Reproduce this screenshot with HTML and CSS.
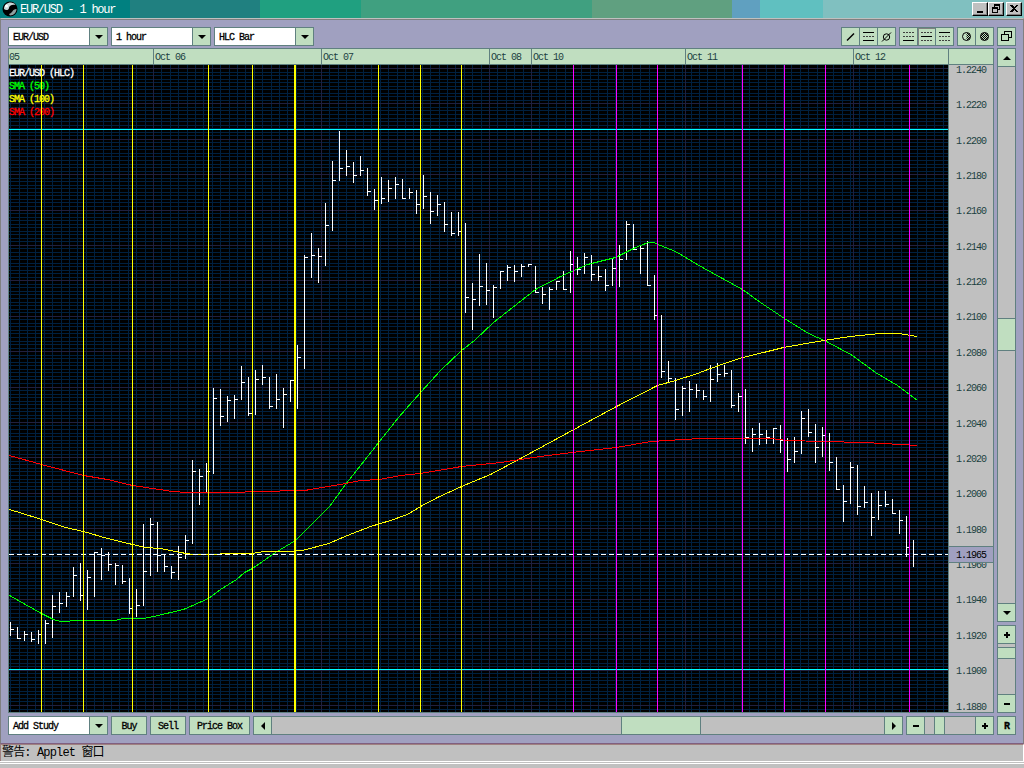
FILE: index.html
```html
<!DOCTYPE html>
<html lang="en">
<head>
    <meta charset="UTF-8">
    <title>EUR/USD - 1 hour</title>
    <link rel="stylesheet" href="styles.css">
</head>
<body>

    <div class="titlebar">
        <svg class="logo" width="18" height="18" viewBox="0 0 18 18">
            <circle cx="9" cy="9" r="7.500" fill="#000"/>
            <path d="M3 9C3 5 6 2.500 10 2.500C13 3 14 4 14.500 5C11 4 8 6 8 8C8 10 5 11 3 9Z" fill="#c8d8d8"/>
            <path d="M8 14C12 13 11 9 15.500 9C15.500 12 13 15.500 9 15.500Z" fill="#90a0a0"/>
            <circle cx="5.500" cy="6" r="1.500" fill="#fff"/>
        </svg>
        <span class="title">EUR/USD - 1 hour</span>
        <div class="window-buttons">
            <div class="win-btn"><svg width="12" height="11"><path d="M3 8h6v2h-6z"/></svg></div>
            <div class="win-btn"><svg width="12" height="11"><path d="M4 1h6v6h-2v3h-6v-6h2zM5 3v1h3v2h1v-3zM3 6v3h4v-3z" fill-rule="evenodd"/></svg></div>
            <div class="win-btn close"><svg width="12" height="11"><path d="M2 2h2l2 2 2-2h2L7 5.500 10 9H8L6 7 4 9H2l3-3.500z"/></svg></div>
        </div>
    </div>

    <div class="client">
        <div class="row toolbar">
            <div class="combo"><span>EUR/USD</span><b><i class="tri down"></i></b></div>
            <div class="combo"><span>1 hour</span><b><i class="tri down"></i></b></div>
            <div class="combo"><span>HLC Bar</span><b><i class="tri down"></i></b></div>

            <div class="tools">
                <div class="group">
                    <div class="tool"><svg width="17" height="17"><path d="M5 12.500L12 5.500" class="ink slant"/></svg></div>
                    <div class="tool"><svg width="17" height="17"><path d="M3 4.500h11M3 12.500h11" class="ink"/><path d="M3 8.500h11" class="ink dots"/></svg></div>
                    <div class="tool"><svg width="17" height="17"><circle cx="8.500" cy="9" r="3.200" class="ink round"/><path d="M4 13.500L13 4.500" class="ink slant thin"/></svg></div>
                </div>
                <div class="group">
                    <div class="tool"><svg width="17" height="17"><path d="M3 4.500h11M3 8.500h11" class="ink dots"/><path d="M3 12.500h11" class="ink"/></svg></div>
                    <div class="tool pressed"><svg width="17" height="17"><path d="M3 4.500h11M3 12.500h11" class="ink dots"/><path d="M3 8.500h11" class="ink"/></svg></div>
                    <div class="tool"><svg width="17" height="17"><path d="M3 8.500h11M3 12.500h11" class="ink dots"/><path d="M3 4.500h11" class="ink"/></svg></div>
                </div>
                <div class="group">
                    <div class="tool"><svg width="17" height="17"><circle cx="8.500" cy="8.500" r="4" class="ink round"/><path d="M8.500 4.500A4 4 0 0 1 8.500 12.500Z" fill="url(#check)"/></svg></div>
                    <div class="tool"><svg width="17" height="17"><defs><pattern id="check" width="2" height="2" patternUnits="userSpaceOnUse"><path d="M0 0h1v1h-1zM1 1h1v1h-1z"/></pattern></defs><circle cx="8.500" cy="8.500" r="4" class="ink round-fill"/></svg></div>
                </div>
                <div class="group">
                    <div class="tool"><svg width="17" height="17"><path d="M6.500 3.500h7v6h-7z" class="ink"/><path d="M3.500 6.500h7v6h-7z" class="ink solid"/></svg></div>
                </div>
            </div>
        </div>

        <div class="middle">
            <div class="chart-panel">
                <div class="dates">
                    <span class="d1">05</span><span class="day">Oct 06</span><span class="day">Oct 07</span><span class="d2">Oct 08</span><span class="d3">Oct 10</span><span class="day">Oct 11</span><span class="d4">Oct 12</span><span class="d5"></span>
                </div>
                <div class="plot-row">
                    <div class="plot">
                        <svg id="chart" width="939" height="647" viewBox="9 65 939 647"></svg>
                        <div class="legend">
                            <p>EUR/USD (HLC)</p>
                            <p class="green">SMA (50)</p>
                            <p class="yellow">SMA (100)</p>
                            <p class="red">SMA (200)</p>
                        </div>
                        <svg class="overlay" id="markers" width="939" height="647" viewBox="9 65 939 647"></svg>
                    </div>
                    <div class="axis">
                        <div id="prices"></div>
                        <div class="last-price">1.1965</div>
                    </div>
                </div>
            </div>

            <div class="side">
                <div class="vscroll big">
                    <div class="cap"><i class="tri up"></i></div>
                    <div class="thumb"></div>
                    <div class="cap end"><i class="tri down"></i></div>
                </div>
                <div class="vscroll small">
                    <div class="cap"><i class="plus"></i></div>
                    <div class="thumb"></div>
                    <div class="cap end"><i class="minus"></i></div>
                </div>
            </div>
        </div>

        <div class="row bottom">
            <div class="combo"><span>Add Study</span><b><i class="tri down"></i></b></div>
            <div class="button buy">Buy</div>
            <div class="button sell">Sell</div>
            <div class="button box">Price Box</div>
            <div class="hscroll long">
                <div class="cap"><i class="tri left"></i></div>
                <div class="thumb"></div>
                <div class="cap end"><i class="tri right"></i></div>
            </div>
            <div class="hscroll short">
                <div class="cap"><i class="minus"></i></div>
                <div class="thumb"></div>
                <div class="cap end"><i class="plus"></i></div>
            </div>
            <div class="button reset">R</div>
        </div>
    </div>

    <div class="status">警告: Applet 窗口</div>
    <div class="footer"></div>

    <script src="script.js"></script>
</body>
</html>
```

FILE: styles.css
```css
* {
    box-sizing: border-box;
}

body {
    margin: 0;
    width: 1024px;
    height: 768px;
    overflow: hidden;
    background: #c0c0c0;
    color: #000;
    font-family: "Liberation Mono", "Noto Sans CJK SC", monospace;
    font-size: 10px;
    letter-spacing: -1px;
    white-space: nowrap;
}

/* Window title */
.titlebar {
    display: flex;
    height: 18px;
    background: linear-gradient(to right, #008080 130px, #208080 130px 260px, #20a080 260px 361px, #40a080 361px 592px, #60a080 592px 732px, #60a0c0 732px 760px, #60c0c0 760px 823px, #80c0c0 823px);
}

.logo {
    margin-left: 1px;
}

.title {
    margin-left: 1px;
    color: #fff;
    font-size: 12px;
    letter-spacing: -1.25px;
    line-height: 20px;
}

.window-buttons {
    display: flex;
    margin: 2px 2px 0 auto;
}

.win-btn {
    width: 16px;
    height: 14px;
    padding: 0 1px;
    background: #c0c0c0;
    border: 1px solid;
    border-color: #fff #000 #000 #fff;
    box-shadow: inset -1px -1px #808080;
}

.win-btn svg {
    display: block;
    shape-rendering: crispEdges;
}

.close {
    margin-left: 2px;
}

/* Applet area */
.client {
    height: 726px;
    padding: 7px 7px 0;
    background: #a0a0c0;
    border-top: 1px solid #c0c0c0;
    border-left: 1px solid #808080;
    border-right: 1px solid #808080;
    border-bottom: 1px solid #806080;
    box-shadow: inset 0 1px #808080;
}

.row {
    display: flex;
    gap: 3px;
    height: 19px;
}

.toolbar {
    margin-top: 1px;
}

.combo {
    display: flex;
    width: 100px;
    height: 19px;
    background: #fff;
    border: 1px solid #608080;
}

.combo span {
    flex: 1;
    padding-left: 4px;
    line-height: 20px;
    -webkit-text-stroke: 0.3px #000;
}

.combo b {
    display: flex;
    width: 18px;
    align-items: center;
    justify-content: center;
    background: #c0dec0;
    border-left: 1px solid #608080;
}

.tri {
    width: 0;
    height: 0;
    border: 4px solid transparent;
}

.down {
    border-top-color: #000;
    border-bottom: 0;
}

.up {
    border-bottom-color: #000;
    border-top: 0;
}

.left {
    border-right-color: #000;
    border-left: 0;
}

.right {
    border-left-color: #000;
    border-right: 0;
}

.plus, .minus {
    width: 6px;
    height: 6px;
    background: linear-gradient(#000, #000) center / 6px 2px no-repeat;
}

.plus {
    background: linear-gradient(#000, #000) center / 6px 2px no-repeat, linear-gradient(#000, #000) center / 2px 6px no-repeat;
}

.tools {
    display: flex;
    gap: 3px;
    margin-left: auto;
}

.group {
    display: flex;
    background: #c0dec0;
    border: 1px solid #608080;
}

.tool + .tool {
    border-left: 1px solid #608080;
}

.tool svg {
    display: block;
}

.pressed {
    box-shadow: inset 1px 1px #808080;
}

.ink {
    fill: none;
    stroke: #000;
    shape-rendering: crispEdges;
}

.dots {
    stroke-dasharray: 2 1;
    stroke: #404040;
}

.slant {
    stroke-width: 1.5px;
    shape-rendering: auto;
}

.thin {
    stroke-width: 1px;
}

.round, .round-fill {
    shape-rendering: auto;
}

.round-fill {
    fill: url(#check);
}

.solid {
    fill: #c0dec0;
}

/* Chart */
.middle {
    display: flex;
    gap: 3px;
    margin-top: 2px;
}

.chart-panel {
    width: 986px;
    height: 665px;
    border: 1px solid #608080;
}

.dates {
    display: flex;
    height: 16px;
    background: #c0dec0;
    color: #204040;
    border-bottom: 1px solid #608080;
    line-height: 18px;
}

.dates span {
    height: 15px;
    padding-left: 1px;
    border-right: 1px solid #608080;
}

.dates .day {
    width: 168px;
}

.dates .d1 {
    width: 145px;
    padding-left: 0;
}

.dates .d2 {
    width: 42px;
}

.dates .d3 {
    width: 154px;
}

.dates .d4 {
    width: 95px;
}

.dates .d5 {
    border-right: 0;
}

.plot-row {
    display: flex;
    height: 647px;
}

.plot {
    position: relative;
    width: 939px;
    height: 647px;
    background: #000;
}

.plot svg {
    display: block;
    shape-rendering: crispEdges;
}

.legend {
    position: absolute;
    top: 2px;
    left: 0;
    color: #fff;
    -webkit-text-stroke: 0.3px currentColor;
}

.legend p {
    height: 13px;
    margin: 0;
    line-height: 14px;
}

.green {
    color: #0f0;
}

.yellow {
    color: #ff0;
}

.red {
    color: #f00;
}

.overlay {
    position: absolute;
    top: 0;
    left: 0;
}

.axis {
    position: relative;
    width: 45px;
    overflow: hidden;
    background: #c0c0c0;
    border-left: 1px solid #608080;
    color: #204040;
}

#prices {
    margin-top: -12.2px;
}

#prices div {
    height: 35.39px;
    padding-left: 7px;
    line-height: 35.39px;
}

.last-price {
    position: absolute;
    top: 481px;
    left: 0;
    width: 100%;
    height: 17px;
    padding-left: 7px;
    background: #a0a0c0;
    border: solid #608080;
    border-width: 1px 0;
    color: #000;
    line-height: 18px;
}

/* Scrollbars */
.side {
    display: flex;
    flex-direction: column;
    gap: 3px;
}

.vscroll, .hscroll {
    display: flex;
    background: #c0c0c0;
    border: 1px solid #608080;
}

.vscroll {
    flex-direction: column;
    width: 19px;
}

.hscroll {
    height: 19px;
}

.cap {
    display: flex;
    align-items: center;
    justify-content: center;
    background: #c0dec0;
}

.thumb {
    background: #c0dec0;
    border: 1px solid #608080;
}

.vscroll .cap {
    height: 18px;
    border-bottom: 1px solid #608080;
}

.vscroll .end {
    margin-top: auto;
    border-top: 1px solid #608080;
    border-bottom: 0;
}

.vscroll .thumb {
    border-width: 1px 0;
}

.hscroll .cap {
    width: 18px;
    border-right: 1px solid #608080;
}

.hscroll .end {
    margin-left: auto;
    border-left: 1px solid #608080;
    border-right: 0;
}

.hscroll .thumb {
    border-width: 0 1px;
}

.big {
    height: 574px;
}

.big .thumb {
    height: 33px;
    margin-top: 251px;
}

.small {
    height: 88px;
}

.small .thumb {
    height: 12px;
    margin-top: 3px;
}

.bottom {
    margin-top: 3px;
}

.button {
    height: 19px;
    background: #c0dec0;
    border: 1px solid #608080;
    line-height: 20px;
    text-align: center;
    -webkit-text-stroke: 0.3px #000;
}

.buy, .sell {
    width: 36px;
}

.box {
    width: 61px;
}

.reset {
    width: 19px;
    font-weight: bold;
}

.long {
    width: 650px;
}

.long .thumb {
    width: 80px;
    margin-left: 349px;
}

.short {
    width: 88px;
}

.short .thumb {
    width: 11px;
    margin-left: 9px;
}

/* Status line */
.status {
    height: 17px;
    padding-left: 1px;
    border-top: 1px solid #a08080;
    border-left: 1px solid #a08080;
    border-right: 1px solid #fff;
    font-size: 12px;
    letter-spacing: -0.85px;
    line-height: 16px;
}

.footer {
    height: 3px;
    border-top: 1px solid #fff;
    border-bottom: 1px solid #fff;
}
```

FILE: script.js
```js
// One bar per hour: top, bottom, close (7px apart)
const bars = [
    [622,635,629],[627,638,638],[631,640,634],[632,641,639],[630,643,634],[620,643,623],[595,637,606],[592,612,603],
    [592,606,596],[567,596,575],[563,600,595],[570,609,577],[552,596,552],[548,579,555],[552,570,564],[563,584,565],
    [565,583,581],[578,613,608],[589,616,605],[524,605,571],[518,575,524],[522,571,555],[554,571,566],[566,578,572],
    [546,579,557],[535,558,540],[460,543,471],[469,504,476],[463,492,471],[388,473,398],[389,425,416],[396,421,400],
    [395,418,399],[366,399,382],[377,415,413],[370,414,379],[365,384,377],[377,408,406],[374,408,399],[388,427,394],
    [380,401,380],[345,408,357],[255,368,257],[233,277,255],[248,282,256],[203,265,225],[161,230,180],[131,180,168],
    [150,175,166],[162,182,175],[156,175,170],[168,195,191],[189,209,200],[177,203,198],[180,201,188],[177,198,184],
    [179,198,198],[188,198,192],[190,213,204],[175,208,196],[192,223,211],[195,215,204],[202,231,224],[212,235,233],
    [212,235,231],[223,312,297],[283,329,299],[254,305,286],[263,304,290],[285,317,287],[271,288,271],[265,280,267],
    [265,281,271],[264,276,266],[264,266,264],[266,292,292],[287,303,294],[287,309,289],[281,289,281],[271,289,289],
    [251,292,264],[257,274,269],[253,273,257],[255,280,274],[266,280,276],[269,290,285],[258,285,268],[245,286,259],
    [221,259,224],[224,249,249],[246,273,248],[241,285,285],[275,319,315],[315,377,371],[361,381,378],[378,419,409],
    [386,415,388],[381,411,389],[384,397,390],[390,399,396],[365,401,379],[363,381,374],[365,376,373],[370,407,405],
    [393,411,396],[389,443,437],[428,451,434],[423,444,434],[430,443,437],[428,443,428],[425,452,440],[438,471,459],
    [437,462,451],[411,453,418],[409,436,432],[424,462,447],[427,456,435],[433,470,462],[457,489,489],[485,521,501],
    [462,503,467],[465,514,506],[486,507,502],[493,535,517],[491,519,505],[491,506,504],[499,513,513],[510,533,520],
    [516,556,547],[540,566,554]
];

const sma50 = "9,595 41,613 53,619 60,621 80,620 115,620 122,618 143,618 153,616 183,609 208,598 220,589 236,579 244,572 252,568 275,552 295,540 298,537 329,506 345,484 379,441 398,417 420,392 440,370 461,350 474,340 493,322 535,289 560,276 587,264 615,257 635,247 648,242 653,242 660,245 675,251 702,267 742,289 760,302 784,318 808,333 826,341 852,355 875,372 897,385 909,394 917,400";
const sma100 = "9,509 22,513 41,519 65,527 83,531 107,538 132,544 145,547 160,548 180,552 192,554 218,554 221,553 252,553 263,551 290,551 302,550 328,543 347,535 370,526 390,520 407,514 420,506 437,497 461,486 490,474 520,458 555,439 590,420 616,406 657,385 675,380 697,373 710,368 727,362 742,357 763,352 783,347 823,340 850,336 880,333 898,333 917,336";
const sma200 = "9,455 41,464 83,475 107,479 132,485 172,491 187,492 220,492 270,491 290,490 304,490 322,487 345,483 360,480 379,479 400,475 420,473 461,466 500,462 540,456 580,451 616,447 650,441 700,438 770,438 787,440 822,441 864,442 900,444 917,445";

const rect = (x, y, w, h, fill) => `<rect x="${x}" y="${y}" width="${w}" height="${h}" fill="${fill}"/>`;
const line = (points, color) => `<polyline points="${points}" transform="translate(0.5 0.5)" fill="none" stroke="${color}"/>`;

let out = "";

// Minor grid
for (let i = -17; i < 95; i++) {
    out += rect(Math.round(153 + i * 8.4), 65, 1, 647, "#002040");
}
for (let i = 0; i < 182; i++) {
    out += rect(9, Math.round(68 + i * 3.539), 939, 1, "#002040");
}

// Day and price grid
[153, 321, 489, 531, 685, 853].forEach(x => {
    out += rect(x, 65, 1, 647, "#202040");
});
for (let i = 0; i < 19; i++) {
    out += rect(9, Math.round(68 + i * 35.39), 939, 1, "#202040");
}

bars.forEach(([high, low, close], i) => {
    const x = 10 + i * 7;
    out += rect(x, high, 1, low - high + 1, "#fff");
    out += rect(x + 1, close, 3, 1, "#fff");
});

out += line(sma50, "#0f0") + line(sma100, "#ff0") + line(sma200, "#f00");
out += '<path d="M9 554.5H948" stroke="#fff" stroke-dasharray="5 3"/>';
document.getElementById("chart").innerHTML = out;

// Session lines and range levels
let marks = rect(9, 129, 939, 1, "#0ff") + rect(9, 669, 939, 1, "#0ff");
[41, 83, 132, 208, 252, 378, 420, 461].forEach(x => {
    marks += rect(x, 65, 1, 647, "#ff0");
});
marks += rect(294, 65, 2, 647, "#ff0");
[573, 616, 657, 742, 784, 825, 909].forEach(x => {
    marks += rect(x, 65, 1, 647, "#f0f");
});
document.getElementById("markers").innerHTML = marks;

let labels = "";
for (let p = 12240; p >= 11880; p -= 20) {
    labels += `<div>${(p / 10000).toFixed(4)}</div>`;
}
document.getElementById("prices").innerHTML = labels;
```
